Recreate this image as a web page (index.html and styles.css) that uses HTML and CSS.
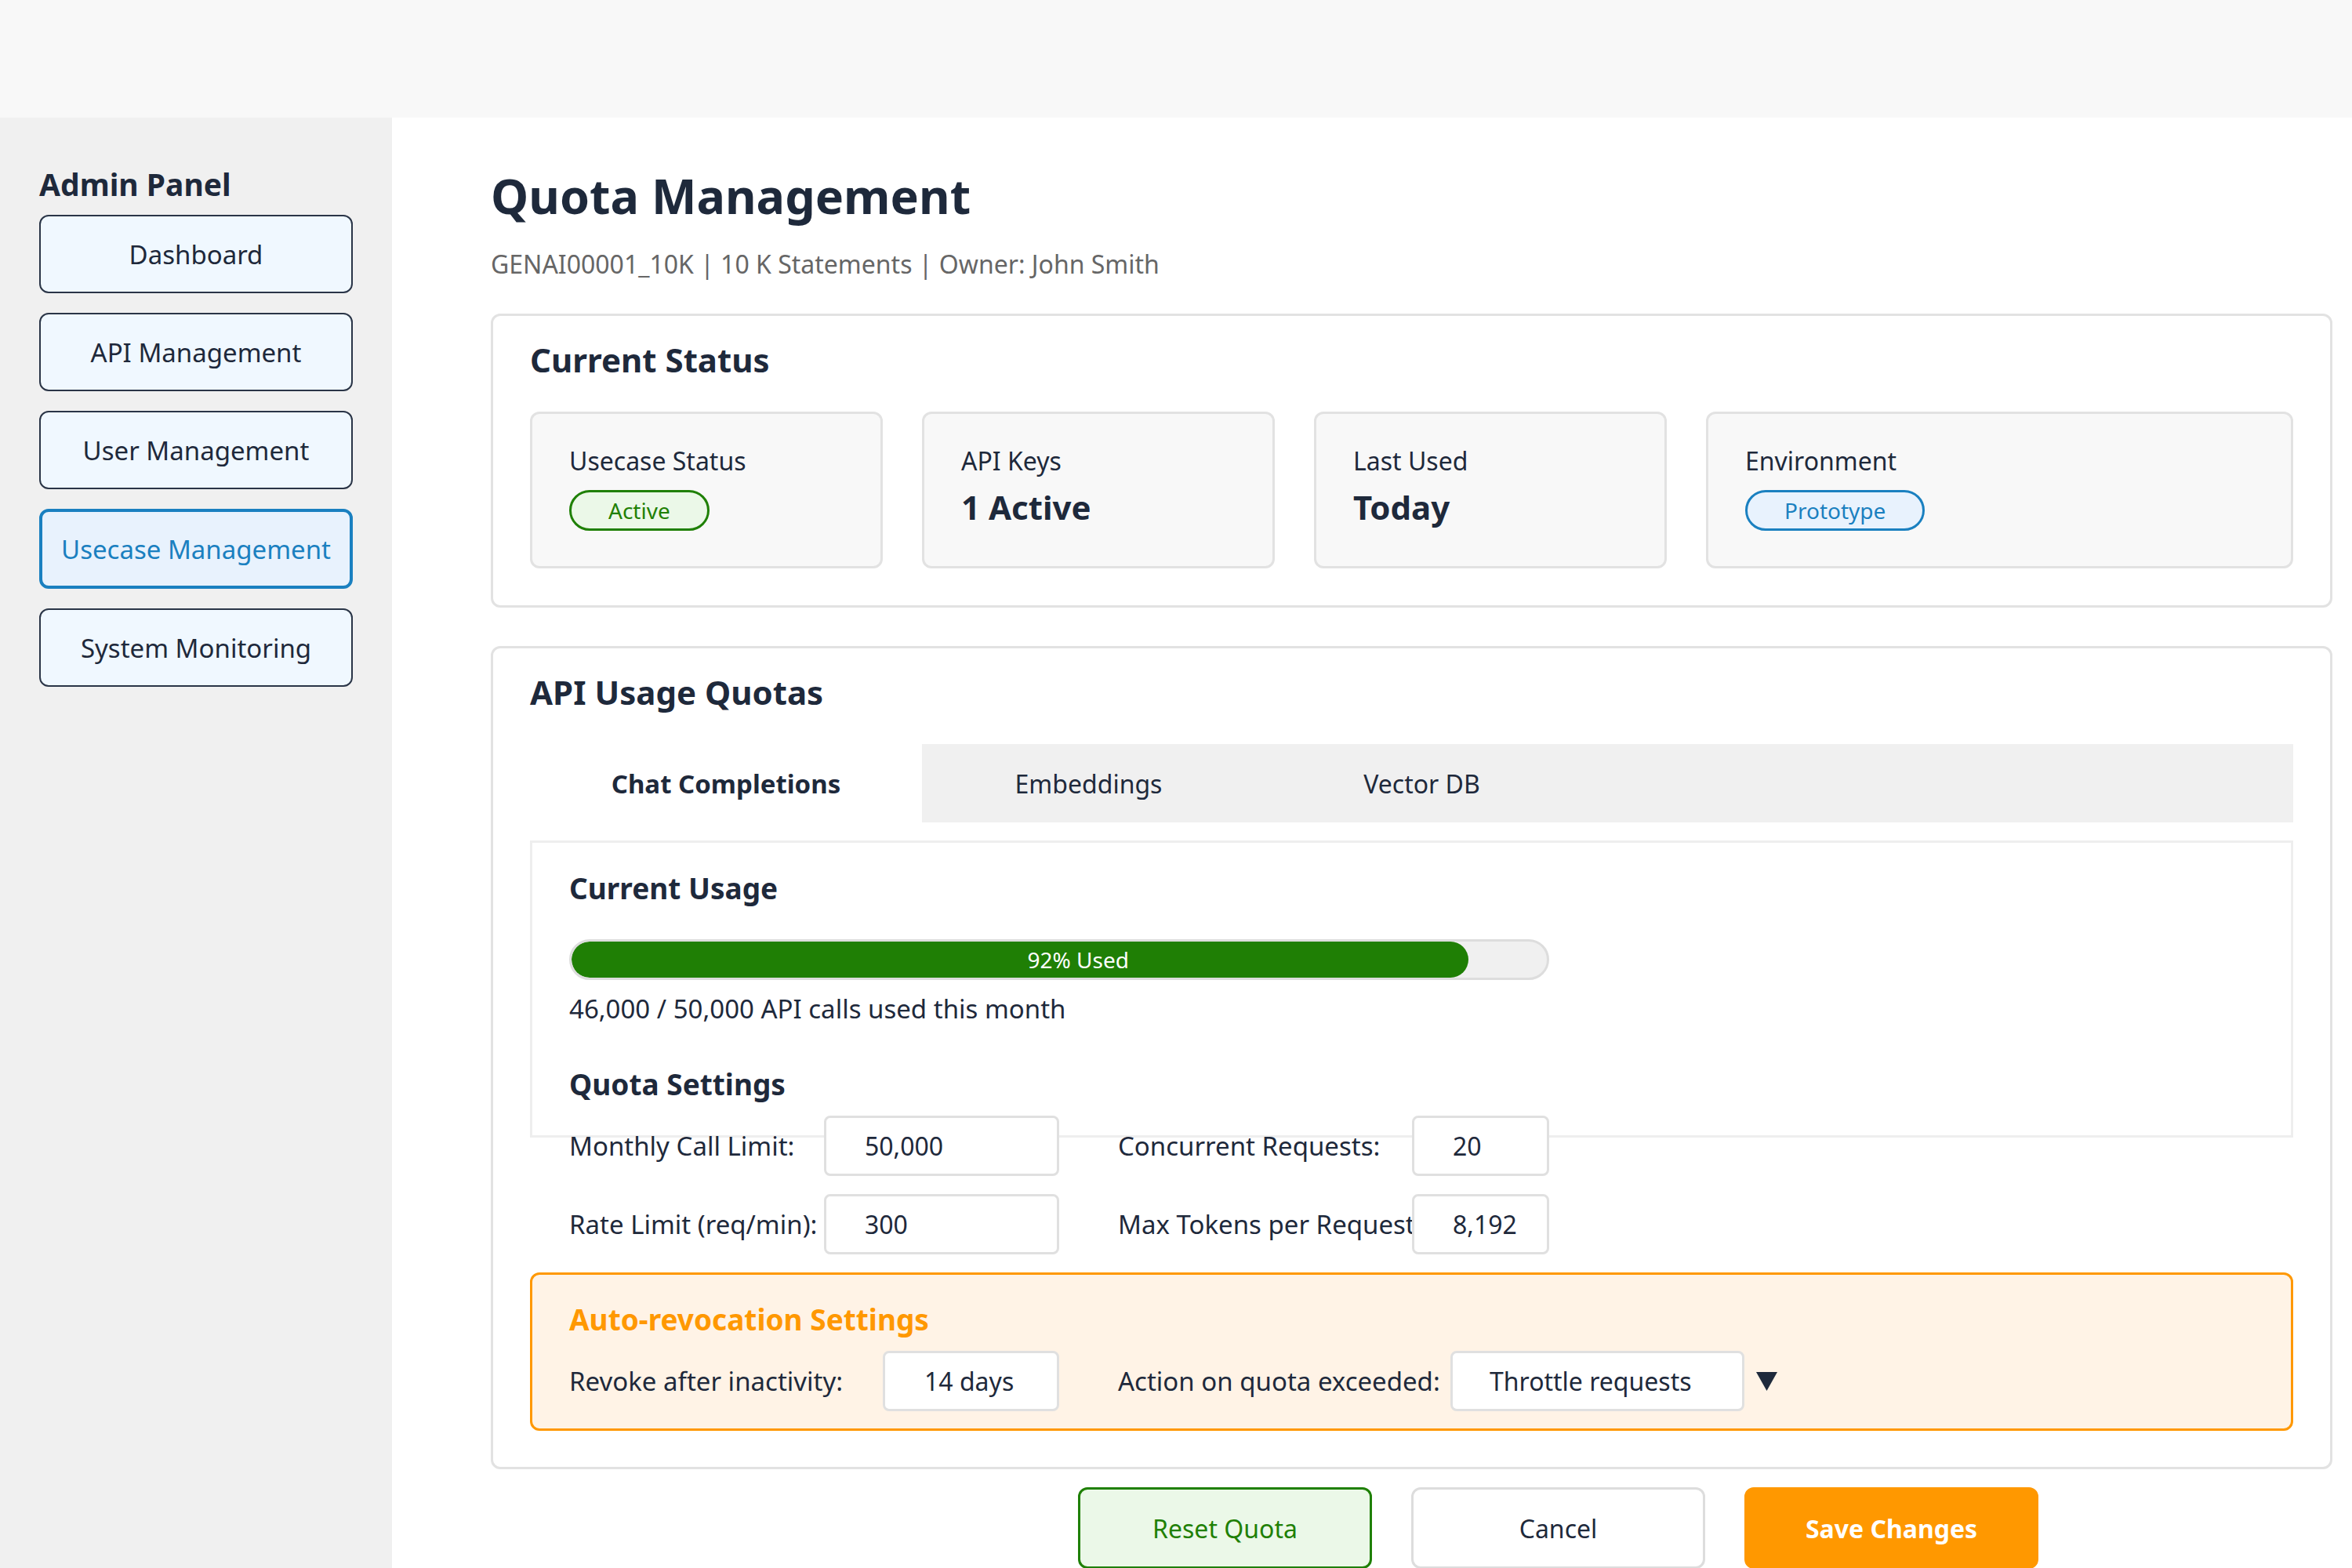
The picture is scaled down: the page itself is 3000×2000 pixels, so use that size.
FILE: index.html
```html
<!DOCTYPE html>
<html lang="en">
<head>
<meta charset="utf-8">
<title>Quota Management</title>
<link rel="stylesheet" href="styles.css">
</head>
<body>
<div class="topbar"></div>
<div class="layout">
  <aside class="sidebar">
    <h2 class="side-title">Admin Panel</h2>
    <nav class="nav">
      <div class="nav-btn">Dashboard</div>
      <div class="nav-btn">API Management</div>
      <div class="nav-btn">User Management</div>
      <div class="nav-btn active">Usecase Management</div>
      <div class="nav-btn">System Monitoring</div>
    </nav>
  </aside>
  <main class="main">
    <h1 class="page-title">Quota Management</h1>
    <p class="subtitle">GENAI00001_10K | 10 K Statements | Owner: John Smith</p>

    <section class="card status-card">
      <h2 class="card-title">Current Status</h2>
      <div class="stats">
        <div class="stat">
          <div class="stat-label">Usecase Status</div>
          <span class="badge badge-green">Active</span>
        </div>
        <div class="stat">
          <div class="stat-label">API Keys</div>
          <div class="stat-value">1 Active</div>
        </div>
        <div class="stat">
          <div class="stat-label">Last Used</div>
          <div class="stat-value">Today</div>
        </div>
        <div class="stat stat-wide">
          <div class="stat-label">Environment</div>
          <span class="badge badge-blue">Prototype</span>
        </div>
      </div>
    </section>

    <section class="card quota-card">
      <h2 class="card-title">API Usage Quotas</h2>
      <div class="tabs">
        <div class="tab tab-active">Chat Completions</div>
        <div class="tab">Embeddings</div>
        <div class="tab">Vector DB</div>
      </div>
      <div class="panel">
        <h3 class="sub-title">Current Usage</h3>
        <div class="progress">
          <div class="progress-fill" style="width: 92%;">92% Used</div>
        </div>
        <p class="usage-text">46,000 / 50,000 API calls used this month</p>
        <h3 class="sub-title settings-title">Quota Settings</h3>
        <div class="form-row">
          <label class="lbl lbl-a">Monthly Call Limit:</label>
          <div class="field field-a">50,000</div>
          <label class="lbl lbl-b">Concurrent Requests:</label>
          <div class="field field-b">20</div>
        </div>
        <div class="form-row row-gap">
          <label class="lbl lbl-a">Rate Limit (req/min):</label>
          <div class="field field-a">300</div>
          <label class="lbl lbl-b">Max Tokens per Request</label>
          <div class="field field-b">8,192</div>
        </div>
      </div>
      <div class="auto-box">
        <h3 class="sub-title auto-title">Auto-revocation Settings</h3>
        <div class="form-row auto-row">
          <label class="lbl lbl-c">Revoke after inactivity:</label>
          <div class="field field-c">14 days</div>
          <label class="lbl lbl-d">Action on quota exceeded:</label>
          <div class="field field-d">Throttle requests</div>
          <svg class="caret" width="27" height="24" viewBox="0 0 27 24"><polygon points="0,0 27,0 13.5,24" fill="#1e293b"/></svg>
        </div>
      </div>
    </section>

    <div class="actions">
      <button class="btn btn-reset">Reset Quota</button>
      <button class="btn btn-cancel">Cancel</button>
      <button class="btn btn-save">Save Changes</button>
    </div>
  </main>
</div>
</body>
</html>
```

FILE: styles.css
```css
* { box-sizing: border-box; }
html, body { margin: 0; padding: 0; }
body {
  font-family: "Noto Sans", "Open Sans", sans-serif;
  color: #1e293b;
  background: #ffffff;
  width: 3000px;
  height: 2000px;
  overflow: hidden;
}
.topbar { height: 150px; background: #f8f8f8; }
.layout { display: flex; min-height: 1850px; }

.sidebar {
  width: 500px;
  flex: 0 0 500px;
  background: #f0f0f0;
  padding: 58px 50px 0;
}
.side-title {
  margin: 0 0 12px;
  font-size: 39px;
  line-height: 54px;
  font-weight: 700;
}
.nav { display: flex; flex-direction: column; gap: 25px; }
.nav-btn {
  width: 400px;
  height: 100px;
  border: 2px solid #2a3547;
  border-radius: 12px;
  background: #f0f8ff;
  display: flex;
  align-items: center;
  justify-content: center;
  font-size: 33px;
  color: #1e293b;
}
.nav-btn.active {
  border: 4px solid #1a80c0;
  background: #e8f2fd;
  color: #1a80c0;
  height: 102px;
}

.main { flex: 1; padding: 60px 25px 0 126px; }
.page-title {
  margin: 0;
  font-size: 61px;
  line-height: 80px;
  font-weight: 700;
}
.subtitle {
  margin: 25px 0 0;
  font-size: 32px;
  line-height: 44px;
  color: #666666;
}
.card {
  border: 3px solid #e2e2e2;
  border-radius: 12px;
  background: #fff;
  padding: 29px 47px 47px;
}
.status-card { margin-top: 41px; }
.card-title {
  margin: 0;
  font-size: 42px;
  line-height: 54px;
  font-weight: 700;
}
.stats { display: flex; gap: 50px; margin-top: 39px; }
.stat {
  flex: 0 0 450px;
  height: 200px;
  background: #f8f8f8;
  border: 3px solid #e2e2e2;
  border-radius: 12px;
  padding: 38px 47px 0;
}
.stat-wide { flex: 1 1 auto; }
.stat-label { font-size: 32px; line-height: 44px; }
.stat-value {
  margin-top: 10px;
  font-size: 42px;
  line-height: 54px;
  font-weight: 700;
}
.badge {
  display: inline-block;
  margin-top: 15px;
  height: 52px;
  line-height: 46px;
  padding: 0 47px;
  border-radius: 26px;
  font-size: 28px;
}
.badge-green { border: 3px solid #1f8005; background: #ebf8e8; color: #1f8005; }
.badge-blue { border: 3px solid #1a80c0; background: #e8f2fd; color: #1a80c0; }

.quota-card { margin-top: 49px; padding-bottom: 46px; }
.tabs {
  display: flex;
  margin-top: 39px;
  height: 100px;
  background: #f0f0f0;
}
.tab {
  flex: 0 0 425px;
  display: flex;
  align-items: center;
  justify-content: center;
  font-size: 32px;
  color: #1e293b;
}
.tab-active { flex-basis: 500px; background: #ffffff; font-weight: 700; font-size: 33px; }

.panel {
  margin-top: 23px;
  height: 379px;
  border: 3px solid #eeeeee;
  padding: 34px 47px 0;
}
.sub-title {
  margin: 0;
  font-size: 37px;
  line-height: 48px;
  font-weight: 700;
}
.progress {
  margin-top: 41px;
  width: 1250px;
  height: 52px;
  border: 3px solid #dddddd;
  border-radius: 26px;
  background: #f0f0f0;
  overflow: hidden;
}
.progress-fill {
  height: 100%;
  background: #1f7f05;
  border-radius: 26px;
  color: #ffffff;
  font-size: 28px;
  display: flex;
  align-items: center;
  justify-content: center;
  padding-left: 148px;
}
.usage-text {
  margin: 15px 0 0;
  font-size: 33px;
  line-height: 44px;
}
.settings-title { margin-top: 50px; }
.form-row {
  display: flex;
  align-items: center;
  height: 77px;
  margin-top: 16px;
}
.row-gap { margin-top: 23px; }
.lbl { font-size: 33px; white-space: nowrap; }
.lbl-a { width: 325px; }
.lbl-b { width: 375px; margin-left: 75px; }
.lbl-c { width: 400px; }
.lbl-d { width: 424px; margin-left: 75px; }
.field {
  height: 77px;
  border: 3px solid #e0e0e0;
  border-radius: 8px;
  background: #ffffff;
  display: flex;
  align-items: center;
  padding-left: 49px;
  font-size: 32px;
  position: relative;
}
.field-a { width: 300px; }
.field-b { width: 175px; padding-left: 49px; }
.field-c { width: 225px; padding-left: 50px; }
.field-d { width: 375px; padding-left: 47px; }
.caret { margin-left: 15px; }

.auto-box {
  margin-top: 172px;
  border: 3px solid #ff9800;
  border-radius: 12px;
  background: #fff3e6;
  padding: 33px 47px 22px;
}
.auto-title { color: #ff9800; }

.actions {
  display: flex;
  gap: 50px;
  margin-top: 23px;
  padding-left: 749px;
}
.btn {
  width: 375px;
  height: 104px;
  border-radius: 12px;
  font-family: "Noto Sans", "Open Sans", sans-serif;
  font-size: 32px;
  cursor: pointer;
}
.btn-reset { border: 3px solid #1f8005; background: #ebf8e8; color: #1f8005; }
.btn-cancel { border: 3px solid #dddddd; background: #ffffff; color: #1e293b; }
.btn-save { border: 3px solid #ff9800; background: #ff9800; color: #ffffff; font-weight: 700; }
```
